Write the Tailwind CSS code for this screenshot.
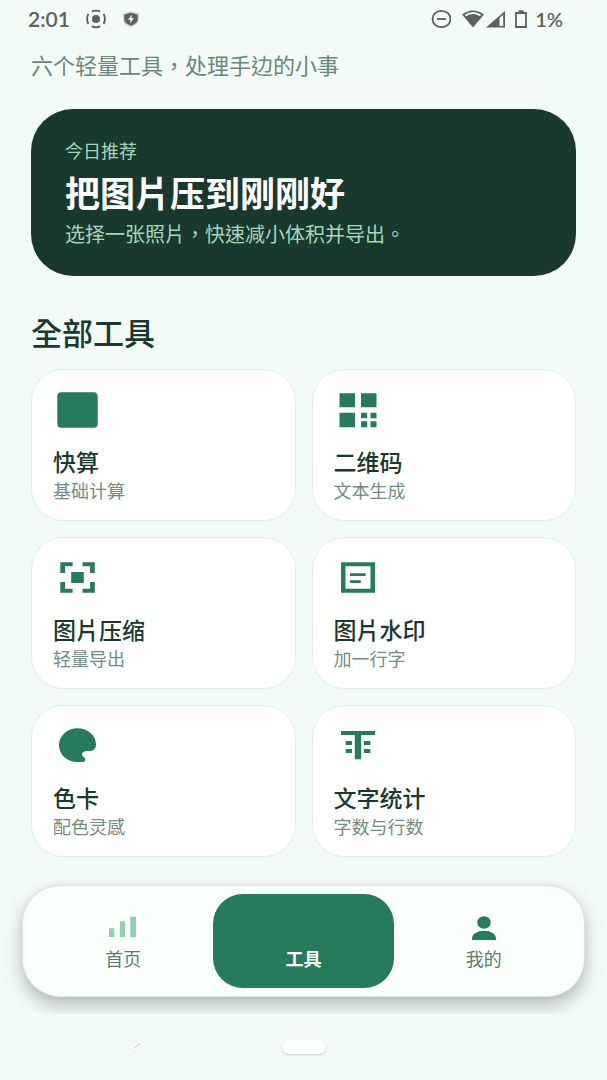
<!DOCTYPE html>
<html lang="zh-Hant">
<head>
  <meta charset="UTF-8" />
  <meta name="viewport" content="width=device-width, initial-scale=1.0" />
  <title>工具</title>
  <script src="https://cdn.jsdelivr.net/npm/@tailwindcss/browser@4"></script>
</head>
<body class="bg-[#f2fbf6] font-['Noto_Sans_CJK_TC',sans-serif] min-h-screen flex flex-col">

  <!-- Status bar -->
  <header class="h-[38px] pl-7 pr-11 flex items-center justify-between font-['Lato',sans-serif] text-xl font-semibold text-[#5b625e]">
    <div class="flex items-center gap-4">
      <span class="text-[21px]">2:01</span>
      <svg class="w-5 h-5" viewBox="0 0 20 20" fill="none" stroke="currentColor" stroke-width="1.8">
        <circle cx="10" cy="10" r="4" fill="currentColor" stroke="none" />
        <path d="M5.8 2.6Q10 .8 14.2 2.6M5.8 17.4Q10 19.2 14.2 17.4M2.3 5Q-.1 10 2.3 15M17.7 5Q20.1 10 17.7 15" />
      </svg>
      <svg class="w-[18px] h-4" viewBox="0 0 18 16">
        <path d="M9 .8L16.500 3v5c0 4-3.500 6.300-7.500 7.500C5 14.300 1.500 12 1.500 8V3z" fill="currentColor" stroke="#d5dcd8" stroke-width="1.400" />
        <path d="M10 3.500L6 8.800h2.500L8 12.500l4-5.300H9.500z" fill="#f2fbf6" />
      </svg>
    </div>
    <div class="flex items-center">
      <svg class="w-5 h-5 mr-2.5" viewBox="0 0 20 20" fill="none" stroke="currentColor" stroke-width="1.8">
        <ellipse cx="10.500" cy="10" rx="9" ry="8.200" />
        <path d="M6 10h9" />
      </svg>
      <svg class="w-6 h-5" viewBox="0 0 24 20">
        <path d="M12 18.500L1 5.500Q12-2.500 23 5.500z" fill="currentColor" />
        <path d="M3.800 5.700Q12 .3 20.200 5.700L19 7.200Q12 2.800 5 7.200z" fill="#f2fbf6" />
      </svg>
      <svg class="w-5 h-5 mr-2.5" viewBox="0 0 20 20">
        <path d="M1 18.500L20 2v16.500z" fill="currentColor" />
        <path d="M14.500 9l3.700-3.200V17h-3.700z" fill="#f2fbf6" />
      </svg>
      <svg class="w-3 h-5 mr-2" viewBox="0 0 12 20" fill="none" stroke="currentColor" stroke-width="1.8">
        <path d="M1 4h10v14H1z" />
        <path d="M3.500 2.300h5" stroke-width="2" />
      </svg>
      <span>1%</span>
    </div>
  </header>

  <main class="px-[31px] pt-[11px]">
    <p class="text-[22px] leading-[30px] text-[#6b877b]">六个轻量工具，处理手边的小事</p>

    <!-- Today's pick -->
    <section class="mt-[30px] bg-[#19392e] rounded-[42px] px-[34px] pt-[27px] pb-7">
      <p class="text-lg leading-7 text-[#a5d6bb]">今日推荐</p>
      <h1 class="text-[35px] leading-14 font-bold text-white">把图片压到刚刚好</h1>
      <p class="text-xl leading-7 text-[#a5d6bb]">选择一张照片，快速减小体积并导出。</p>
    </section>

    <h2 class="mt-[34px] mb-[15px] text-[31px] leading-11 font-medium text-[#19392e]">全部工具</h2>

    <!-- Tool grid -->
    <div class="grid grid-cols-2 gap-4">
      <a href="#calc" class="block bg-white border border-[#deeee6] rounded-[32px] px-[21px] pt-4 pb-4">
        <svg class="w-12 h-12" viewBox="0 0 48 48" fill="#267b5d">
          <rect x="4.300" y="6.300" width="40.400" height="35.400" rx="4" />
        </svg>
        <h3 class="mt-3 text-[23px] leading-[30px] font-medium text-[#19392e]">快算</h3>
        <p class="text-lg leading-7 text-[#738c81]">基础计算</p>
      </a>
      <a href="#qrcode" class="block bg-white border border-[#deeee6] rounded-[32px] px-[21px] pt-4 pb-4">
        <svg class="w-12 h-12" viewBox="0 0 48 48" fill="#267b5d">
          <path d="M5.500 7.300H21v14H5.500zM27 7.300h15.500v14H27zM5.500 26.800H21v14.500H5.500zM27 26.800h6.200v5.500H27zM36.500 26.800h6v5.500h-6zM27 35.300h6.200v6H27zM36.500 35.300h6v6h-6z" />
        </svg>
        <h3 class="mt-3 text-[23px] leading-[30px] font-medium text-[#19392e]">二维码</h3>
        <p class="text-lg leading-7 text-[#738c81]">文本生成</p>
      </a>
      <a href="#compress" class="block bg-white border border-[#deeee6] rounded-[32px] px-[21px] pt-4 pb-4">
        <svg class="w-12 h-12" viewBox="0 0 48 48" fill="#267b5d">
          <path d="M7.300 8.300h12.300v4H12v6.700H7.300zM29.500 8.300h12.300V19h-4.700v-6.700h-7.600zM7.300 28H12v6.700h7.600v4H7.300zM37.100 28h4.700v10.700H29.500v-4h7.600zM18.200 18h12.600v11H18.200z" />
        </svg>
        <h3 class="mt-3 text-[23px] leading-[30px] font-medium text-[#19392e]">图片压缩</h3>
        <p class="text-lg leading-7 text-[#738c81]">轻量导出</p>
      </a>
      <a href="#watermark" class="block bg-white border border-[#deeee6] rounded-[32px] px-[21px] pt-4 pb-4">
        <svg class="w-12 h-12" viewBox="0 0 48 48" fill="#267b5d">
          <path fill-rule="evenodd" d="M7 8.300h34v30.400H7zM11.500 12.300v22.400h25V12.300z" />
          <path d="M16 19.300h15.700V22H16zM16 26.300h10.800V29H16z" />
        </svg>
        <h3 class="mt-3 text-[23px] leading-[30px] font-medium text-[#19392e]">图片水印</h3>
        <p class="text-lg leading-7 text-[#738c81]">加一行字</p>
      </a>
      <a href="#palette" class="block bg-white border border-[#deeee6] rounded-[32px] px-[21px] pt-4 pb-4">
        <svg class="w-12 h-12" viewBox="0 0 48 48" fill="#267b5d">
          <path d="M24.500 6.300C14.200 6.300 6 13.800 6 23.200S14.200 40.100 24.500 40.100H29.300C32.500 40.100 33 37.300 31.500 35.800C30.700 35 29 34 29 32.500C29 30.300 31.500 29 34 29H37C40.500 29 43 26.500 43 22.500C43 13.500 34.700 6.300 24.500 6.300z" />
        </svg>
        <h3 class="mt-3 text-[23px] leading-[30px] font-medium text-[#19392e]">色卡</h3>
        <p class="text-lg leading-7 text-[#738c81]">配色灵感</p>
      </a>
      <a href="#count" class="block bg-white border border-[#deeee6] rounded-[32px] px-[21px] pt-4 pb-4">
        <svg class="w-12 h-12" viewBox="0 0 48 48" fill="#267b5d">
          <path d="M7 9h34v4H27.200v24.200h-6.400V13H7zM11.700 19H18v4h-6.300zM11.700 27H18v4h-6.300zM30 19h6.300v4H30zM30 27h6.300v4H30z" />
        </svg>
        <h3 class="mt-3 text-[23px] leading-[30px] font-medium text-[#19392e]">文字统计</h3>
        <p class="text-lg leading-7 text-[#738c81]">字数与行数</p>
      </a>
    </div>
  </main>

  <!-- Tab bar -->
  <div class="px-[22px] pt-7 pb-[17px] overflow-hidden">
    <nav class="grid grid-cols-3 bg-[#fafffc] border border-[#d3e9de] rounded-[38px] px-2.5 py-2 shadow-[0_9px_18px_rgba(0,0,0,0.24),0_0_6px_rgba(0,0,0,0.05)]">
      <button class="flex flex-col items-center rounded-[30px] pt-[18px] pb-4 text-lg leading-7 text-[#5f7b6f]">
        <svg class="w-8 h-8" viewBox="0 0 32 32" fill="#91d0b0">
          <path d="M2 16.300h5.300V25H2zM13 9.300h5V25h-5zM23.300 4.700H29V25h-5.700z" />
        </svg>
        首页
      </button>
      <button class="flex flex-col items-center rounded-[30px] pt-[18px] pb-4 text-lg leading-7 bg-[#267b5d] text-white font-bold" aria-current="page">
        <svg class="w-8 h-8" viewBox="0 0 32 32" fill="#267b5d">
          <rect x="4" y="5" width="24" height="20" rx="3" />
        </svg>
        工具
      </button>
      <button class="flex flex-col items-center rounded-[30px] pt-[18px] pb-4 text-lg leading-7 text-[#5f7b6f]">
        <svg class="w-8 h-8" viewBox="0 0 32 32" fill="#267b5d">
          <ellipse cx="16" cy="10.500" rx="6.700" ry="6.200" />
          <path d="M4 28v-1.500c0-4.500 5.500-7.800 12-7.800s12 3.300 12 7.800V28z" />
        </svg>
        我的
      </button>
    </nav>
  </div>

  <!-- System navigation -->
  <footer class="h-[66px] grid grid-cols-[1fr_44px_1fr] items-center">
    <button class="justify-self-center mr-3" aria-label="返回">
      <svg class="w-4 h-4" viewBox="0 0 16 16" fill="none" stroke-width="2">
        <path d="M13 4L5 10l8 5.500" stroke="#d3dbd7" />
        <path d="M13 2.500L4.500 9l8.500 6" stroke="#fcfffd" />
      </svg>
    </button>
    <button class="h-3.5 rounded-full bg-[#fcfffd] shadow-[0_1px_2px_rgba(0,0,0,0.18)]" aria-label="主屏幕"></button>
  </footer>
</body>
</html>
